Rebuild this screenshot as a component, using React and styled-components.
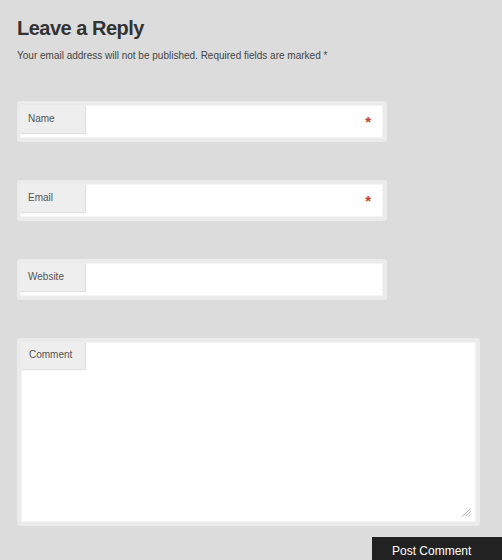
import styled, { createGlobalStyle } from "styled-components";

const GlobalStyle = createGlobalStyle`
  html, body {
    margin: 0;
    padding: 0;
    background: #dcdcdc;
    overflow: hidden;
  }
  body {
    font-family: "Liberation Sans", Arial, sans-serif;
  }
`;

const fields = [
  { label: "Name", required: true },
  { label: "Email", required: true },
  { label: "Website", required: false },
];

const App = () => {
  return (
    <>
      <GlobalStyle />
      <Wrapper>
        <Heading>Leave a Reply</Heading>
        <Note>Your email address will not be published. Required fields are marked *</Note>
        <Form>
          {fields.map((f) => (
            <Field key={f.label}>
              <FieldInner>
                <Label>{f.label}</Label>
                <InputArea>{f.required && <Required>*</Required>}</InputArea>
              </FieldInner>
            </Field>
          ))}
          <CommentField>
            <CommentInner>
              <Label $short>Comment</Label>
              <Grip width="9" height="9" viewBox="0 0 9 9">
                <line x1="8.5" y1="0.5" x2="0.5" y2="8.5" stroke="#999" strokeWidth="0.8" />
                <line x1="8.5" y1="3.5" x2="3.5" y2="8.5" stroke="#999" strokeWidth="0.8" />
                <line x1="8.5" y1="6.5" x2="6.5" y2="8.5" stroke="#999" strokeWidth="0.8" />
              </Grip>
            </CommentInner>
          </CommentField>
          <SubmitButton>Post Comment</SubmitButton>
        </Form>
      </Wrapper>
    </>
  );
};

const Wrapper = styled.div`
  padding: 16px 0 0 17px;
`;

const Heading = styled.h2`
  margin: 0;
  font-size: 20px;
  line-height: 24px;
  font-weight: bold;
  letter-spacing: -0.5px;
  color: #333;
`;

const Note = styled.p`
  margin: 9px 0 0;
  font-size: 10px;
  line-height: 14px;
  color: #444;
`;

const Form = styled.div`
  margin-top: 38px;
  display: flex;
  flex-direction: column;
`;

const Field = styled.div`
  width: 370px;
  height: 41px;
  box-sizing: border-box;
  padding: 4px 4px 4px 3px;
  margin-bottom: 38px;
  background: #ebebeb;
  border-radius: 3px;
`;

const FieldInner = styled.div`
  display: flex;
  height: 100%;
  background: #fff;
  box-shadow: inset 0 0 0 1px #f4f4f4;
`;

const Label = styled.div`
  width: ${(p) => (p.$short ? "64px" : "65px")};
  height: ${(p) => (p.$short ? "27px" : "28px")};
  box-sizing: border-box;
  padding-left: 8px;
  line-height: ${(p) => (p.$short ? "26px" : "28px")};
  font-size: 10px;
  color: #555;
  background: #eeeeee;
  box-shadow: 1px 1px 1px rgba(0, 0, 0, 0.12);
`;

const InputArea = styled.div`
  flex: 1;
  display: flex;
  justify-content: flex-end;
  padding-right: 12px;
`;

const Required = styled.span`
  margin-top: 9px;
  font-size: 15px;
  line-height: 15px;
  font-weight: bold;
  color: #c8401e;
`;

const CommentField = styled.div`
  width: 463px;
  height: 188px;
  box-sizing: border-box;
  padding: 4px;
  background: #ebebeb;
  border-radius: 3px;
`;

const CommentInner = styled.div`
  position: relative;
  height: 100%;
  background: #fff;
  box-shadow: inset 0 0 0 1px #f4f4f4;
`;

const Grip = styled.svg`
  position: absolute;
  right: 5px;
  bottom: 5px;
`;

const SubmitButton = styled.button`
  align-self: flex-start;
  margin: 11px 0 0 355px;
  width: 150px;
  height: 30px;
  padding: 0 0 3px 20px;
  border: none;
  border-radius: 0;
  background: #222;
  color: #fff;
  text-align: left;
  font-family: "Liberation Sans", Arial, sans-serif;
  font-size: 12px;
`;

export default App;
